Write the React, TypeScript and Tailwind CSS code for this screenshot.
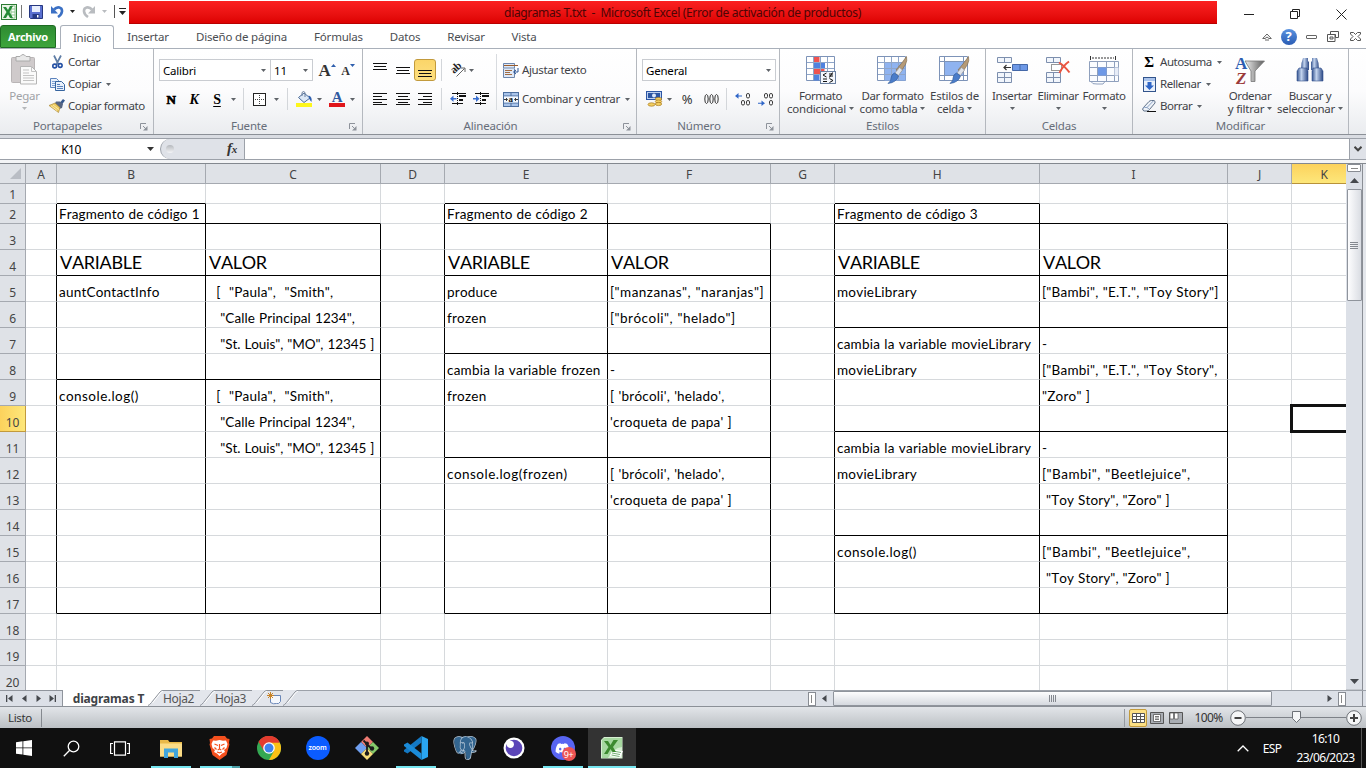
import React from "react";
import { SiPostgresql } from "react-icons/si";
import { FaDiscord } from "react-icons/fa";

/* ---------- small shared pieces ---------- */

function Arrow({ c = "#5f6368", big = false }: { c?: string; big?: boolean }) {
  return (
    <svg width={big ? 7 : 5} height={big ? 4 : 3} viewBox="0 0 6 3" className="shrink-0" preserveAspectRatio="none">
      <path d="M0 0h6L3 3z" fill={c} />
    </svg>
  );
}

function Slot({ w, className = "", children }: { w: string; className?: string; children?: React.ReactNode }) {
  return <div className={`flex shrink-0 items-center justify-center ${w} ${className}`}>{children}</div>;
}

function Sep() {
  return <div className="h-[22px] w-px shrink-0 bg-[#d3d6da]" />;
}

function Launcher() {
  return (
    <svg width="8" height="8" viewBox="0 0 8 8" className="shrink-0">
      <path d="M.5 6V.5H6M3 3l3 3" stroke="#8d929a" fill="none" />
      <path d="M7.500 3v4.500H3z" fill="#8d929a" />
    </svg>
  );
}

function Group({ w, label, launcher, children }: { w: string; label: string; launcher?: boolean; children: React.ReactNode }) {
  return (
    <section className={`flex h-full shrink-0 flex-col border-r border-[#b4b8be] ${w}`}>
      <div className="flex h-[69px] pt-[2px]">{children}</div>
      <div className="flex h-[17px] items-center text-[#666d79]">
        <div className={`flex-1 text-center ${launcher ? "-mr-px" : ""}`}>{label}</div>
        {launcher && (
          <div className="flex w-[19px] justify-center pt-[2px]">
            <Launcher />
          </div>
        )}
      </div>
    </section>
  );
}

function BigButton({ w, icon, a, b, below, tight = true }: { w: string; icon: React.ReactNode; a: string; b?: string; below?: boolean; tight?: boolean }) {
  return (
    <div className={`flex shrink-0 flex-col items-center pt-[3px] ${w}`}>
      <div className="flex h-[32px] items-center justify-center">{icon}</div>
      <div className={`mt-[3px] h-[13px] whitespace-nowrap leading-[13px] ${tight ? "tracking-[-0.4px]" : ""}`}>{a}</div>
      {b && (
        <div className="flex h-[13px] items-center gap-[3px] whitespace-nowrap leading-[13px] tracking-[-0.25px]">
          {b}
          <Arrow />
        </div>
      )}
      {below && (
        <div className="flex h-[12px] items-center">
          <Arrow />
        </div>
      )}
    </div>
  );
}

function SmallButton({ icon, text, arrow }: { icon: React.ReactNode; text: string; arrow?: boolean }) {
  return (
    <div className="flex h-[22px] items-center whitespace-nowrap">
      <div className="flex w-[18px] shrink-0 justify-center">{icon}</div>
      <span className="ml-[2px] pb-px">{text}</span>
      {arrow && (
        <span className="ml-[5px]">
          <Arrow />
        </span>
      )}
    </div>
  );
}

/* ---------- icons ---------- */

const ExcelMark = () => (
  <svg width="16" height="16" viewBox="0 0 16 16">
    <rect x=".5" y=".5" width="15" height="15" fill="#e9f4e6" stroke="#2b7a32" />
    <path d="M10 2h4v12h-4zM10 5h4M10 8h4M10 11h4" stroke="#8fc48d" fill="#fff" />
    <path d="M2 3h3l2 3 2-4h3L8.500 8l3.500 6H9L7 10.500 5 14H2l3.500-6z" fill="#258a36" />
  </svg>
);

const SaveIcon = () => (
  <svg width="14" height="14" viewBox="0 0 14 14">
    <path d="M.5.5h13v13h-12l-1-1z" fill="#5a70d0" stroke="#26377f" />
    <path d="M3 1h8v6H3z" fill="#e8eefc" />
    <path d="M3.500 9h7v4.500h-7z" fill="#263a86" />
    <path d="M8 10h1.500v2.500H8z" fill="#fff" />
  </svg>
);

const UndoIcon = ({ c = "#3b70c4", flip = false }: { c?: string; flip?: boolean }) => (
  <svg width="13" height="13" viewBox="0 0 13 13" className={flip ? "-scale-x-100" : ""}>
    <path d="M3 4.500C6.500.8 11.300 2.300 11 6.300c-.2 2.700-1.800 4.200-4 5.700" fill="none" stroke={c} strokeWidth="2.600" />
    <path d="M0 1v7.500h7z" fill={c} />
  </svg>
);

const PasteIcon = () => (
  <svg width="27" height="31" viewBox="0 0 27 31">
    <rect x=".5" y="3.500" width="23" height="25" rx="1" fill="#cfcacb" stroke="#b9b5b6" />
    <path d="M5 2.500h4q3-4 6 0h4V7H5z" fill="#e9e9e9" stroke="#aaa" />
    <path d="M9.500 12.500h11l5 5v12.500h-16z" fill="#fafafa" stroke="#b5b5b5" />
    <path d="M20.500 12.500v5h5M12 16h6M12 19h6M12 21.500h11M12 24h11M12 26.500h11" stroke="#c3c3c3" fill="none" />
  </svg>
);

const CutIcon = () => (
  <svg width="11" height="14" viewBox="0 0 11 14">
    <path d="M2 .5l4.500 9M9 .5L4.500 9" stroke="#5f7da5" strokeWidth="1.700" />
    <circle cx="2.700" cy="11" r="1.900" fill="none" stroke="#2450a4" strokeWidth="1.600" />
    <circle cx="8.200" cy="10.500" r="1.900" fill="none" stroke="#2450a4" strokeWidth="1.600" />
  </svg>
);

const CopyIcon = () => (
  <svg width="15" height="13" viewBox="0 0 15 13">
    <path d="M.5.5h6l2 2v7h-8z" fill="#eaf1fb" stroke="#5c83bd" />
    <path d="M2 3.500h4M2 5.500h5M2 7.500h4" stroke="#7fa1d2" />
    <path d="M5.500 3.500h6l3 3v6h-9z" fill="#eaf1fb" stroke="#37659f" />
    <path d="M7 6.500h3M7 8.500h6M7 10.500h6" stroke="#5c83bd" />
  </svg>
);

const BrushIcon = () => (
  <svg width="16" height="14" viewBox="0 0 16 14">
    <path d="M11 3.500L14 0l2 1.500-3 4z" fill="#35588e" />
    <path d="M7 2.500h4l3 2.500-1 4-3 1L5.500 5z" fill="#566583" />
    <path d="M0 6.500L6 4l5 4.500-1.500 5z" fill="#ecca62" stroke="#a5802d" strokeWidth=".6" />
    <path d="M2 6.800l6 4.700M4 6l6 4.500" stroke="#fff0b6" strokeWidth=".8" />
  </svg>
);

function Lines({ d, h = 12 }: { d: string; h?: number }) {
  return (
    <svg width="14" height={h} viewBox={`0 0 14 ${h}`} shapeRendering="crispEdges">
      <path d={d} stroke="#111" fill="none" />
    </svg>
  );
}

const IndentIcon = ({ right = false }: { right?: boolean }) => (
  <svg width="16" height="14" viewBox="0 0 16 14" className="shrink-0">
    <path d="M2 1.500h14M9 3.500h7M9 4.500h7M9 7.500h4M9 8.500h4M2 11.500h11" stroke="#111" shapeRendering="crispEdges" />
    <path d="M7.500 0v14" stroke="#111" strokeDasharray="1 1" />
    {right ? <path d="M0 6h3V3.500L6.500 6.700 3 10V7.500H0z" fill="#3a6fd0" /> : <path d="M6.500 6h-3V3.500L0 6.700 3.500 10V7.500h3z" fill="#3a6fd0" />}
  </svg>
);

const OrientIcon = () => (
  <svg width="16" height="15" viewBox="0 0 16 15" className="overflow-visible">
    <text x="4" y="12" transform="rotate(-42 4 12)" fontSize="11" letterSpacing="-0.3" fontWeight="bold" fontFamily="Liberation Serif" fill="#222">ab</text>
    <path d="M6.500 14.500L14.500 6.500M15 10V6H11" stroke="#666" fill="none" />
  </svg>
);

const WrapIcon = () => (
  <svg width="16" height="15" viewBox="0 0 16 15">
    <path d="M.5 5V.5h11V5zM.5 5.500v9h11v-9" fill="#dfe9f8" stroke="#6d86ac" />
    <path d="M1 2.500h14" stroke="#9b5d2c" />
    <path d="M2 7.500h7M2 9.500h5M2 11.500h7" stroke="#a06c43" />
    <path d="M15 5v4h-4m2-2l-2.500 2 2.500 2" stroke="#2b5598" fill="none" />
  </svg>
);

const MergeIcon = () => (
  <svg width="16" height="15" viewBox="0 0 16 15">
    <rect x=".5" y=".5" width="15" height="14" fill="#a9c4ea" stroke="#4d6f9f" />
    <path d="M1 4h14M1 11h14M8 1v3M8 11v3" stroke="#4d6f9f" />
    <path d="M1 4.500h14v6H1z" fill="#f4f8fe" />
    <path d="M1 7.500h3M12 7.500h3M3 6l1.500 1.500L3 9M13 6l-1.500 1.500L13 9" stroke="#222" fill="none" strokeWidth=".9" />
    <text x="5.600" y="10" fontSize="9" fontWeight="bold" fontFamily="Liberation Serif" fill="#111">a</text>
  </svg>
);

const BorderIcon = () => (
  <svg width="13" height="13" viewBox="0 0 13 13" shapeRendering="crispEdges">
    <rect x=".5" y=".5" width="12" height="12" fill="#fff" stroke="#222" />
    <path d="M6.500 2v10M2 6.500h10" stroke="#444" strokeDasharray="1 1" />
  </svg>
);

const FillIcon = () => (
  <svg width="17" height="16" viewBox="0 0 17 16">
    <path d="M2.500 6.500L8 2l6 5-6 4.500z" fill="#dce8f6" stroke="#4c6c98" />
    <path d="M6 5V1.500q1.500-2 3 0V6" stroke="#6a7f9d" fill="none" />
    <path d="M12.500 4.500q4 1 3 6.500-2-2-2.500-4z" fill="#2f5fae" />
    <path d="M0 12h16v4H0z" fill="#fdf61c" />
  </svg>
);

const CurrencyIcon = () => (
  <svg width="17" height="16" viewBox="0 0 17 16">
    <rect x="0" y="0" width="16" height="9" fill="#2c56a3" />
    <rect x="1.500" y="1.500" width="13" height="6" fill="none" stroke="#bcd0f0" />
    <circle cx="8" cy="4.500" r="2" fill="#dbe7fa" />
    <ellipse cx="12.500" cy="8" rx="3.200" ry="1.600" fill="#f3cf62" stroke="#a7791d" strokeWidth=".7" />
    <ellipse cx="12.500" cy="10.500" rx="3.200" ry="1.600" fill="#f3cf62" stroke="#a7791d" strokeWidth=".7" />
    <ellipse cx="12.500" cy="13" rx="3.200" ry="1.600" fill="#f3cf62" stroke="#a7791d" strokeWidth=".7" />
    <ellipse cx="5.500" cy="13.500" rx="3.500" ry="1.700" fill="#f3cf62" stroke="#a7791d" strokeWidth=".7" />
  </svg>
);

const DecimalIcon = ({ less = false }: { less?: boolean }) => (
  <svg width="16" height="13" viewBox="0 0 16 13" fill="none" stroke="#333" className="shrink-0">
    {less ? (
      <>
        <rect x="6.500" y=".5" width="3" height="4.500" rx="1.400" />
        <rect x="11.500" y=".5" width="3" height="4.500" rx="1.400" />
        <rect x="11.500" y="7.500" width="3" height="4.500" rx="1.400" />
        <path d="M0 9.800h3.500V7.500L7 10.300 3.500 13v-2.200H0z" fill="#2f66c8" stroke="none" />
      </>
    ) : (
      <>
        <rect x="11.500" y=".5" width="3" height="4.500" rx="1.400" />
        <rect x="6.500" y="7.500" width="3" height="4.500" rx="1.400" />
        <rect x="11.500" y="7.500" width="3" height="4.500" rx="1.400" />
        <path d="M7 2.500H3.500V0L0 3l3.500 2.800V3.500H7z" fill="#2f66c8" stroke="none" />
      </>
    )}
  </svg>
);

const GridBase = ({ fill }: { fill?: React.ReactNode }) => (
  <>
    <path d="M.5.5h28v24H.5z" fill="#fff" stroke="#7d93b8" />
    {fill}
    <path d="M7.500 1v23M14.500 1v23M21.500 1v23M1 6.500h27M1 12.500h27M1 18.500h27" stroke="#8fa5c8" fill="none" />
  </>
);

const Brush = () => (
  <>
    <path d="M29.500.5q1 4-1 8L23 17l-4-3 6.500-8z" fill="#b59a76" stroke="#7b6548" strokeWidth=".6" />
    <path d="M22.500 11.500l3 2.500-4 5.500-3.500-2.500z" fill="#dfe3ea" stroke="#8a8f99" strokeWidth=".6" />
    <path d="M17.500 17l4 3q-2 6.500-10.500 7.500 3.500-3 3-5.500.5-4 3.500-5z" fill="#4a7cc9" stroke="#2d5796" strokeWidth=".6" />
  </>
);

const CondIcon = () => (
  <svg width="30" height="28" viewBox="0 0 30 28">
    <GridBase fill={<><path d="M7.500 1h6v5.500h-6zM7.500 13h11v5.500h-11z" fill="#ef5350" /><path d="M7.500 7h11.500v5.500h-11.500zM7.500 19h6v5.500h-6z" fill="#4f82df" /></>} />
    <rect x="14.500" y="15.500" width="15" height="12" fill="#f4f7fc" stroke="#6a7f9f" />
    <path d="M20.500 17l-3.500 2 3.500 2M17 23h4M17 25.500h4M23 18h4M23 20h4M26.500 16.500l-3 5M23.500 22.500l3.500 2-3.500 2" stroke="#111" fill="none" />
  </svg>
);

const TableIcon = () => (
  <svg width="31" height="28" viewBox="0 0 31 28">
    <GridBase fill={<path d="M7.500 7h21v17.500h-21z" fill="#8fb3f0" />} />
    <Brush />
  </svg>
);

const CellStyleIcon = () => (
  <svg width="31" height="28" viewBox="0 0 31 28">
    <path d="M.5.5h28v24H.5z" fill="#fff" stroke="#7d93b8" />
    <path d="M5.500 5.500h19v14h-19z" fill="#8fb3f0" />
    <path d="M5.500 1v23M24.500 1v23M1 5.500h27M1 19.500h27" stroke="#7d93b8" />
    <Brush />
  </svg>
);

const InsertCells = () => (
  <svg width="31" height="27" viewBox="0 0 31 27">
    <path d="M.5.500h14v5H.5zM7.500.5v5M.5 15.500h14v10H.5zM7.500 15.500v10M.5 20.500h14" fill="#f2f6fc" stroke="#7d8fae" />
    <path d="M15.500 7.500h15v6h-15z" fill="#6d98e6" stroke="#4468a8" />
    <path d="M23 7.500v6" stroke="#4468a8" />
    <path d="M14 10.500H7M9.500 8L7 10.500 9.500 13" stroke="#333" fill="none" strokeWidth="1.200" />
  </svg>
);

const DeleteCells = () => (
  <svg width="25" height="27" viewBox="0 0 25 27">
    <path d="M.5.500h14v5H.5zM7.500.5v5M.5 15.500h14v10H.5zM7.500 15.500v10M.5 20.500h14" fill="#f2f6fc" stroke="#7d8fae" />
    <path d="M5.500 7.500h10v6h-10z" fill="#fff" stroke="#333" strokeDasharray="1 1" />
    <path d="M13 5.500q5 3 10.500 10M23 4.500q-6 4-9.500 11.500" stroke="#ea5440" strokeWidth="2" fill="none" />
  </svg>
);

const FormatCells = () => (
  <svg width="31" height="29" viewBox="0 0 31 29">
    <path d="M1.500 0v4M26.500 0v4" stroke="#333" />
    <path d="M3 2h22" stroke="#333" strokeDasharray="2 1" />
    <path d="M.5 5.500h29v20H.5zM.5 11.500h29M.5 19.500h29M8.500 5.500v20M17.500 5.500v20M25.500 5.500v20M2 25.500q1 3 6 2.500h6l2-2.500" fill="#fafcff" stroke="#8fa0bd" />
    <path d="M9 11.500h8.500v8H9z" fill="#6d98e6" />
    <path d="M25.500 11.500h4v8h-4z" fill="#e7edf8" />
  </svg>
);

const RellenarIcon = () => (
  <svg width="13" height="15" viewBox="0 0 13 15">
    <rect x=".5" y=".5" width="12" height="14" fill="#eaf1fb" stroke="#32548c" />
    <path d="M1 1h11v3H1z" fill="#a9c3ec" />
    <path d="M4.500 5h4v3.500H11L6.500 13 2 8.500h2.500z" fill="#2f66c8" />
  </svg>
);

const EraserIcon = () => (
  <svg width="14" height="12" viewBox="0 0 14 12">
    <path d="M1 8L7 1.500Q8 .5 9.500.5h2.500Q13.500 1 13 3L7.500 9.500Q6.500 11 5 11H2Q0 10.500 1 8z" fill="#eef2f8" stroke="#5f7088" />
    <path d="M1 8q1-1 4-.5l2 1.500M5 7.500L11.500.800" stroke="#8ba2c4" fill="none" />
    <path d="M5 11.500h9" stroke="#111" />
  </svg>
);

const SortIcon = () => (
  <svg width="30" height="30" viewBox="0 0 30 30" className="overflow-visible">
    <defs>
      <linearGradient id="fun" x1="0" x2="1">
        <stop offset="0" stopColor="#ededed" />
        <stop offset="1" stopColor="#5c5c5c" />
      </linearGradient>
    </defs>
    <path d="M10 6h19.500L20 16v10.500h-4V16z" fill="url(#fun)" stroke="#777" strokeWidth=".8" />
    <text x="0" y="13.500" fontSize="17" fontWeight="bold" fontFamily="Liberation Serif" fill="#2c5cb0" stroke="#fff" strokeWidth=".5" paintOrder="stroke">A</text>
    <text x="1" y="28.500" fontSize="17" fontWeight="bold" fontStyle="italic" fontFamily="Liberation Serif" fill="#9b3b3b" stroke="#fff" strokeWidth=".5" paintOrder="stroke">Z</text>
  </svg>
);

const Binoculars = () => (
  <svg width="28" height="26" viewBox="0 0 28 26">
    <defs>
      <linearGradient id="bino" x1="0" x2="1">
        <stop offset="0" stopColor="#34538f" />
        <stop offset=".4" stopColor="#c3d4ee" />
        <stop offset="1" stopColor="#2b4885" />
      </linearGradient>
    </defs>
    <path d="M7 1h5v3l1 1v8H5l.5-7z" fill="url(#bino)" />
    <path d="M16 1h5l1.500 5 .5 7h-8V5l1-1z" fill="url(#bino)" />
    <path d="M1 14l2-3h8l1 3v10H1z" fill="url(#bino)" stroke="#34538f" strokeWidth=".6" />
    <path d="M16 14l1-3h8l2 3v10H16z" fill="url(#bino)" stroke="#34538f" strokeWidth=".6" />
  </svg>
);

/* ---------- title bar and tabs ---------- */

function TitleBar() {
  return (
    <header className="flex h-[25px] bg-white">
      <div className="flex w-[129px] items-center pb-[2px]">
        <Slot w="w-[18px]"><ExcelMark /></Slot>
        <Slot w="w-[6px]"><div className="h-[13px] w-px bg-[#777]" /></Slot>
        <Slot w="w-[24px]"><SaveIcon /></Slot>
        <Slot w="w-[18px]"><UndoIcon /></Slot>
        <Slot w="w-[13px]"><Arrow c="#222" /></Slot>
        <Slot w="w-[19px]"><UndoIcon c="#b9bcc0" flip /></Slot>
        <Slot w="w-[12px]"><Arrow c="#b9bcc0" /></Slot>
        <Slot w="w-[9px]"><div className="h-[13px] w-px bg-[#555]" /></Slot>
        <Slot w="w-[7px]">
          <svg width="7" height="7" viewBox="0 0 7 7"><path d="M0 .5h7" stroke="#222" /><path d="M0 3h7L3.500 7z" fill="#222" /></svg>
        </Slot>
      </div>
      <div className="mt-px flex h-[23px] w-[1088px] items-center justify-center whitespace-pre bg-gradient-to-b from-[#fb2020] to-[#dc0000] text-[12px] tracking-[-0.35px] text-[#4d0505] shadow-[inset_0_-1px_0_#b80000]">
        <span className="pl-[19px]">{"diagramas T.txt  -  Microsoft Excel (Error de activación de productos)"}</span>
      </div>
      <div className="flex flex-1 pl-[9px] pt-[4px] text-[#222]">
        <Slot w="w-[46px]" className="h-[20px]"><div className="h-px w-[10px] bg-[#222]" /></Slot>
        <Slot w="w-[46px]" className="h-[20px]">
          <svg width="10" height="10" viewBox="0 0 10 10" fill="none" stroke="#222"><path d="M.5 2.500h7v7h-7zM2.500 2.500v-2h7v7h-2" /></svg>
        </Slot>
        <Slot w="w-[46px]" className="h-[20px]">
          <svg width="11" height="11" viewBox="0 0 11 11" stroke="#222"><path d="M.5.5l10 10M10.500.5l-10 10" /></svg>
        </Slot>
      </div>
    </header>
  );
}

function TabRow() {
  return (
    <nav className="flex h-[24px] border-b border-[#a9b0ba] bg-white text-[#4a4d52]">
      <div className="flex w-[56px] items-center justify-center rounded-t-[3px] border border-[#1e6b22] bg-gradient-to-b from-[#2e8b32] to-[#3da53c] text-[11px] font-bold tracking-[-0.25px] text-white">
        Archivo
      </div>
      <div className="ml-[4px] flex h-[24px] w-[54px] items-center justify-center rounded-t-[3px] border border-b-0 border-[#a9b0ba] bg-white pb-px">
        Inicio
      </div>
      <Slot w="w-[68px]">Insertar</Slot>
      <Slot w="w-[119px]">Diseño de página</Slot>
      <Slot w="w-[75px]">Fórmulas</Slot>
      <Slot w="w-[58px]">Datos</Slot>
      <Slot w="w-[64px]">Revisar</Slot>
      <Slot w="w-[52px]">Vista</Slot>
      <div className="ml-auto flex">
        <Slot w="w-[20px]">
          <svg width="10" height="8" viewBox="0 0 10 8" fill="none" stroke="#666"><path d="M.7 5.500L5 1l4.300 4.500H7L5 4 3 5.500zM3 7h4" /></svg>
        </Slot>
        <Slot w="w-[23px]">
          <div className="flex size-[16px] items-center justify-center rounded-full bg-gradient-to-b from-[#5a92e0] to-[#2a5cb4] text-[13px] font-bold leading-none text-white">?</div>
        </Slot>
        <Slot w="w-[22px]"><div className="h-[4px] w-[11px] rounded-[1px] border border-[#666]" /></Slot>
        <Slot w="w-[22px]">
          <svg width="12" height="11" viewBox="0 0 12 11" fill="#fff" stroke="#555"><path d="M3.500.5h8v6h-3v-3h-5zM.5 3.500h7.500v7H.5zM3 6h3v2H3z" /></svg>
        </Slot>
        <Slot w="w-[22px]">
          <svg width="11" height="9" viewBox="0 0 11 9" fill="#fff" stroke="#555"><path d="M.5.5h3l2 2 2-2h3v1.500L8 4.500 10.500 7v1.500h-3l-2-2-2 2h-3V7L3 4.500.5 2z" /></svg>
        </Slot>
      </div>
    </nav>
  );
}

/* ---------- ribbon ---------- */

function Ribbon() {
  return (
    <div className="flex h-[86px] border-b border-[#8b9097] bg-gradient-to-b from-white via-[#fcfcfd] to-[#eaecef]">
      <Group w="w-[154px]" label="Portapapeles" launcher>
        <div className="flex w-[49px] shrink-0 flex-col items-center pt-[3px] text-[#a0a2a6]">
          <PasteIcon />
          <div className="mt-[4px] h-[13px] leading-[13px]">Pegar</div>
          <div className="flex h-[12px] items-center"><Arrow c="#b5b7ba" /></div>
        </div>
        <div className="-ml-px flex flex-col tracking-[-0.4px]">
          <SmallButton icon={<CutIcon />} text="Cortar" />
          <SmallButton icon={<CopyIcon />} text="Copiar" arrow />
          <SmallButton icon={<BrushIcon />} text="Copiar formato" />
        </div>
      </Group>

      <Group w="w-[209px]" label="Fuente" launcher>
        <div className="flex flex-col pl-[5px] pt-[8px]">
          <div className="flex h-[22px] items-center">
            <div className="flex h-[22px] w-[112px] items-center justify-between border border-[#c9ccd1] bg-white pl-[3px] pr-[4px] text-black">Calibri<Arrow /></div>
            <div className="-ml-px flex h-[22px] w-[43px] items-center justify-between border border-[#c9ccd1] bg-white pl-[3px] pr-[4px] text-black">11<Arrow /></div>
            <Slot w="w-[26px]" className="pl-[2px] font-[Liberation_Serif] text-[17px] font-bold text-[#333]">
              A<svg width="5" height="3" viewBox="0 0 5 3" className="mb-[10px] shrink-0"><path d="M0 3h5L2.500 0z" fill="#2f5fae" /></svg>
            </Slot>
            <Slot w="w-[18px]" className="pt-[3px] font-[Liberation_Serif] text-[12px] font-bold text-[#333]">
              A<svg width="5" height="3" viewBox="0 0 5 3" className="mb-[13px] shrink-0"><path d="M0 0h5L2.500 3z" fill="#2f5fae" /></svg>
            </Slot>
          </div>
          <div className="mt-[7px] flex h-[22px] items-center text-black">
            <Slot w="w-[24px]" className="font-[Liberation_Serif] text-[13px] font-black [-webkit-text-stroke:0.7px_#000]">N</Slot>
            <Slot w="w-[22px]" className="font-[Liberation_Serif] text-[14px] font-black italic">K</Slot>
            <Slot w="w-[24px]" className="font-[Liberation_Serif] text-[14px] font-bold underline underline-offset-2">S</Slot>
            <Slot w="w-[9px]"><Arrow /></Slot>
            <div className="w-[5px]" />
            <Sep />
            <Slot w="w-[30px]"><BorderIcon /></Slot>
            <Slot w="w-[5px]"><Arrow /></Slot>
            <div className="w-[8px]" />
            <Sep />
            <Slot w="w-[33px]"><FillIcon /></Slot>
            <Slot w="w-0" className="-ml-[2px] mr-[2px]"><Arrow /></Slot>
            <Slot w="w-[32px]">
              <div className="flex flex-col items-center">
                <span className="h-[12px] font-[Liberation_Serif] text-[15px] font-bold leading-[12px] text-[#3059a0]">A</span>
                <span className="h-[4px] w-[16px] bg-[#e0161b]" />
              </div>
            </Slot>
            <Slot w="w-0" className="-ml-px"><Arrow /></Slot>
          </div>
        </div>
      </Group>

      <Group w="w-[274px]" label="Alineación" launcher>
        <div className="flex pt-[8px]">
          <div className="flex w-[78px] flex-col pl-[5px]">
            <div className="flex h-[22px] items-center">
              <Slot w="w-[23px]"><Lines d="M0 1.500h14M1 4.500h12M0 7.500h14" h={16} /></Slot>
              <Slot w="w-[23px]"><Lines d="M0 5.500h14M1 8.500h12M0 11.500h14" h={16} /></Slot>
              <Slot w="w-[22px]" className="h-[22px] rounded-[3px] border border-[#c29a3c] bg-gradient-to-b from-[#fbd569] to-[#fddf80]">
                <Lines d="M0 10.500h14M1 13.500h12M0 16.500h14" h={20} />
              </Slot>
            </div>
            <div className="mt-[7px] flex h-[22px] items-center">
              <Slot w="w-[23px]"><Lines d="M0 .5h14M0 3.500h9M0 6.500h14M0 9.500h9M0 11.500h14" h={12} /></Slot>
              <Slot w="w-[23px]"><Lines d="M0 .5h14M2 3.500h10M0 6.500h14M2 9.500h10M0 11.500h14" h={12} /></Slot>
              <Slot w="w-[22px]"><Lines d="M0 .5h14M5 3.500h9M0 6.500h14M5 9.500h9M0 11.500h14" h={12} /></Slot>
            </div>
          </div>
          <div className="flex w-[55px] flex-col">
            <div className="flex h-[22px] items-center"><Sep /><Slot w="w-[27px]" className="pl-[5px] pb-px"><OrientIcon /></Slot><Arrow /></div>
            <div className="mt-[7px] flex h-[22px] items-center"><Sep /><Slot w="w-[32px]"><IndentIcon /></Slot><Slot w="w-[14px]"><IndentIcon right /></Slot></div>
          </div>
          <div className="-mt-[5px] h-[56px] w-px bg-[#d8dbdf]" />
          <div className="flex flex-col pl-[5px] tracking-[-0.35px]">
            <SmallButton icon={<WrapIcon />} text="Ajustar texto" />
            <div className="mt-[7px]"><SmallButton icon={<MergeIcon />} text="Combinar y centrar" arrow /></div>
          </div>
        </div>
      </Group>

      <Group w="w-[143px]" label="Número" launcher>
        <div className="flex flex-col pl-[5px] pt-[8px]">
          <div className="flex h-[22px] w-[134px] items-center justify-between border border-[#c9ccd1] bg-white pl-[3px] pr-[4px] text-black">General<Arrow /></div>
          <div className="mt-[7px] flex h-[22px] items-center text-[#333]">
            <Slot w="w-[24px]"><CurrencyIcon /></Slot>
            <Slot w="w-[7px]"><Arrow /></Slot>
            <Slot w="w-[28px]" className="text-[13px]">%</Slot>
            <Slot w="w-[20px]">
              <svg width="15" height="10" viewBox="0 0 15 10" fill="none" stroke="#333"><path d="M2.500.5q1.700 0 1.700 4.500t-1.700 4.500T.8 5 2.500.5zM7.500.5q1.700 0 1.700 4.500t-1.700 4.500T5.800 5 7.500.5zM12.500.5q1.700 0 1.700 4.500t-1.700 4.500T10.800 5 12.500.5z" /></svg>
            </Slot>
            <div className="w-[5px]" />
            <Sep />
            <Slot w="w-[32px]"><DecimalIcon /></Slot>
            <Slot w="w-[13px]"><DecimalIcon less /></Slot>
          </div>
        </div>
      </Group>

      <Group w="w-[206px]" label="Estilos">
        <BigButton w="w-[81px]" icon={<CondIcon />} a="Formato" b="condicional" />
        <BigButton w="w-[63px]" icon={<TableIcon />} a="Dar formato" b="como tabla" />
        <BigButton w="w-[61px]" icon={<CellStyleIcon />} a="Estilos de" b="celda" tight={false} />
      </Group>

      <Group w="w-[147px]" label="Celdas">
        <BigButton w="w-[52px]" icon={<InsertCells />} a="Insertar" below />
        <BigButton w="w-[40px]" icon={<DeleteCells />} a="Eliminar" below />
        <BigButton w="w-[52px]" icon={<FormatCells />} a="Formato" below />
      </Group>

      <Group w="w-[216px]" label="Modificar">
        <div className="flex w-[88px] shrink-0 flex-col pl-[7px] tracking-[-0.45px]">
          <SmallButton icon={<span className="font-[Liberation_Serif] text-[15px] font-bold leading-none text-black">Σ</span>} text="Autosuma" arrow />
          <SmallButton icon={<RellenarIcon />} text="Rellenar" arrow />
          <SmallButton icon={<EraserIcon />} text="Borrar" arrow />
        </div>
        <BigButton w="w-[58px]" icon={<SortIcon />} a="Ordenar" b="y filtrar" />
        <BigButton w="w-[62px]" icon={<Binoculars />} a="Buscar y" b="seleccionar" />
      </Group>
    </div>
  );
}

/* ---------- formula bar ---------- */

function FormulaBar() {
  return (
    <div className="flex h-[29px] flex-col bg-[#d9dce2] pt-[3px]">
      <div className="flex h-[22px] border-y border-[#9ca1a9] bg-white">
        <div className="flex w-[160px] items-center text-[12px] text-black">
          <span className="w-[147px] pr-[5px] text-center tracking-[-0.5px]">K10</span>
          <Arrow c="#333" big />
        </div>
        <div className="flex w-[85px] items-center justify-between rounded-l-full border-l border-r border-[#9ca1a9] bg-[#dfe2e8] pl-[5px] pr-[7px]">
          <div className="size-[8px] rounded-full bg-gradient-to-b from-[#b5b8bd] to-[#f4f5f7]" />
          <span className="font-[Liberation_Serif] text-[15px] font-bold italic text-[#333]">f<span className="text-[11px]">x</span></span>
        </div>
        <div className="flex-1" />
        <div className="flex w-[17px] items-center justify-center border-l border-[#9ca1a9] bg-[#dfe2e8]">
          <svg width="8" height="6" viewBox="0 0 8 6" fill="none" stroke="#444" strokeWidth="2"><path d="M.5.8L4 4.300 7.500.8" /></svg>
        </div>
      </div>
      <div className="h-[3px] bg-[#f3f4f6]" />
      <div className="h-px bg-[#83888f]" />
    </div>
  );
}

/* ---------- sheet ---------- */

const cols = [
  ["A", "w-[31px]"], ["B", "w-[149px]"], ["C", "w-[175px]"], ["D", "w-[64px]"], ["E", "w-[163px]"], ["F", "w-[163px]"],
  ["G", "w-[64px]"], ["H", "w-[205px]"], ["I", "w-[188px]"], ["J", "w-[64px]"], ["K", "w-[54px]"],
];

const values: Record<string, string> = {
  B2: "Fragmento de código 1", E2: "Fragmento de código 2", H2: "Fragmento de código 3",
  B4: "VARIABLE", C4: "VALOR", E4: "VARIABLE", F4: "VALOR", H4: "VARIABLE", I4: "VALOR",
  B5: "auntContactInfo", B9: "console.log()",
  C5: '  [  "Paula",  "Smith",', C6: '   "Calle Principal 1234",', C7: '   "St. Louis", "MO", 12345 ]',
  C9: '  [  "Paula",  "Smith",', C10: '   "Calle Principal 1234",', C11: '   "St. Louis", "MO", 12345 ]',
  E5: "produce", E6: "frozen", E8: "cambia la variable frozen", E9: "frozen", E12: "console.log(frozen)",
  F5: '["manzanas", "naranjas"]', F6: '["brócoli", "helado"]', F8: "-",
  F9: "[ 'brócoli', 'helado',", F10: "'croqueta de papa' ]", F12: "[ 'brócoli', 'helado',", F13: "'croqueta de papa' ]",
  H5: "movieLibrary", H7: "cambia la variable movieLibrary", H8: "movieLibrary",
  H11: "cambia la variable movieLibrary", H12: "movieLibrary", H15: "console.log()",
  I5: '["Bambi", "E.T.", "Toy Story"]', I7: "-", I8: '["Bambi", "E.T.", "Toy Story",', I9: '"Zoro" ]',
  I11: "-", I12: '["Bambi", "Beetlejuice",', I13: ' "Toy Story", "Zoro" ]', I15: '["Bambi", "Beetlejuice",', I16: ' "Toy Story", "Zoro" ]',
};

const tight = "tracking-[0.1px] [word-spacing:0.5px]";
const tighter = "tracking-[-0.07px] [word-spacing:0.7px]";
const wide = "tracking-[0.47px] [word-spacing:0.5px]";

const spacing: Record<string, string> = {
  B2: tight, E2: tight, H2: tight, C6: tight, C10: tight, I13: tight, I16: tight,
  C7: tighter, C11: tighter,
  F5: wide, F6: wide, E12: wide, B9: wide, H15: wide, I12: wide, I15: wide,
};

const blocks = [
  { before: "A", left: "B", right: "C", rules: [2, 4, 8, 17] },
  { before: "D", left: "E", right: "F", rules: [2, 4, 7, 11, 17] },
  { before: "G", left: "H", right: "I", rules: [2, 4, 6, 10, 14, 17] },
];

function ruleRight(col: string, row: number) {
  return blocks.some((b) =>
    ((col === b.before || col === b.left) && row >= 2 && row <= 17) || (col === b.right && row >= 3 && row <= 17));
}

function ruleBottom(col: string, row: number) {
  return blocks.some((b) => (col === b.left && row === 1) || ((col === b.left || col === b.right) && b.rules.includes(row)));
}

function Sheet() {
  const rows = Array.from({ length: 20 }, (_, i) => i + 1);
  return (
    <div className="relative flex h-[526px] w-[1346px] shrink-0 flex-col overflow-hidden bg-white">
      <div className="flex h-[20px] shrink-0 bg-[#dfe2e7] text-[12px] text-[#444]">
        <div className="flex w-[26px] items-end justify-end border-b border-r border-[#a5a9b0] p-[4px]">
          <svg width="11" height="11" viewBox="0 0 11 11"><path d="M11 0v11H0z" fill="#b9bdc4" /></svg>
        </div>
        {cols.map(([name, w]) => (
          <div key={name} className={`flex items-center justify-center border-b pt-[2px] ${w} ${name === "K" ? "border-[#b8923a] bg-gradient-to-b from-[#fcd25c] to-[#fde77a] pl-[10px]" : "border-r border-[#a5a9b0]"}`}>
            {name}
          </div>
        ))}
      </div>
      {rows.map((r) => (
        <div key={r} className={`flex shrink-0 ${r <= 2 ? "h-[20px]" : "h-[26px]"}`}>
          <div className={`flex w-[26px] items-end justify-center border-b border-r text-[12px] leading-[17px] text-[#444] ${r === 10 ? "border-[#c29a3c] bg-gradient-to-r from-[#fcd25c] to-[#fde77a]" : "border-[#a5a9b0] bg-[#dfe2e7]"}`}>
            {r}
          </div>
          {cols.map(([name, w]) => {
            const big = r === 4;
            const gap = spacing[name + r] ?? "tracking-[0.22px] [word-spacing:0.5px]";
            return (
              <div
                key={name}
                className={`flex items-end overflow-hidden whitespace-pre border-b font-[Lato] text-black [font-kerning:none] [font-variant-ligatures:none] ${w} ${name === "K" ? "" : "border-r"} ${ruleRight(name, r) ? "border-r-black" : "border-r-[#d6d9dc]"} ${ruleBottom(name, r) ? "border-b-black" : "border-b-[#d6d9dc]"} ${big ? "pb-px pl-[3px] text-[18px] leading-[24px] tracking-[-0.3px]" : `pl-[2px] text-[13.500px] leading-[18px] ${gap}`}`}
              >
                {values[name + r] ?? ""}
              </div>
            );
          })}
        </div>
      ))}
      <div className="absolute left-[1290px] top-[240px] h-[29px] w-[70px] border-[3px] border-[#111]" />
    </div>
  );
}

function VerticalScroll() {
  return (
    <div className="flex h-[526px] w-[20px] bg-[#e4e7ec]">
      <div className="flex w-[17px] flex-col items-center border-r border-[#8a8e95] bg-[#dce0e7]">
        <div className="flex h-[8px] w-[14px] items-center justify-center rounded-[1px] border border-[#888c93] bg-white"><div className="h-px w-[7px] bg-[#888]" /></div>
        <div className="flex h-[17px] items-center"><svg width="9" height="5" viewBox="0 0 9 5"><path d="M0 5h9L4.500 0z" fill="#45484d" /></svg></div>
        <div className="flex h-[112px] w-[15px] flex-col items-center justify-center gap-px rounded-[1px] border border-[#8f949c] bg-gradient-to-r from-[#fdfdfe] to-[#dadde3]">
          <div className="h-px w-[8px] bg-[#84888f]" />
          <div className="h-px w-[8px] bg-[#84888f]" />
          <div className="h-px w-[8px] bg-[#84888f]" />
          <div className="h-px w-[8px] bg-[#84888f]" />
        </div>
        <div className="mt-auto flex h-[17px] w-full items-center justify-center border-b border-[#c3c7cd]"><svg width="9" height="5" viewBox="0 0 9 5"><path d="M0 0h9L4.500 5z" fill="#45484d" /></svg></div>
      </div>
    </div>
  );
}

/* ---------- sheet tabs ---------- */

function Slant({ left, right = "#e3e6ec" }: { left: string; right?: string }) {
  return (
    <svg width="15" height="16" viewBox="0 0 15 16" className="shrink-0">
      <path d="M0 0h15v16H0z" fill={right} />
      <path d="M0 0h14L2 14q-1 1.500-2 1.500z" fill={left} />
      <path d="M15 .5Q13 .5 12 2L3.500 12.500Q1.500 15 0 15.500" fill="none" stroke="#8f949c" />
      <path d="M15 1.500Q13.500 1.500 12.500 3L4.500 13" fill="none" stroke="#fff" />
    </svg>
  );
}

function NavGlyph({ d }: { d: string }) {
  return <svg width="7" height="7" viewBox="0 0 7 7"><path d={d} fill="#45484d" /></svg>;
}

function SheetTabs() {
  return (
    <div className="flex h-[16px] bg-[#dce0e7] text-[12px] leading-[14px] text-[#555]">
      <div className="flex w-[63px] items-center border-r border-t border-[#8f949c] pl-[4px]">
        <Slot w="w-[10px]"><NavGlyph d="M0 0h1.300v7H0zM6.500 0v7L2 3.500z" /></Slot>
        <Slot w="w-[20px]"><NavGlyph d="M5.500 0v7L1 3.500z" /></Slot>
        <Slot w="w-[8px]"><NavGlyph d="M1.500 0v7L6 3.500z" /></Slot>
        <Slot w="w-[21px]"><NavGlyph d="M.5 0v7L5 3.500zM5.700 0H7v7H5.700z" /></Slot>
      </div>
      <Slot w="w-[85px]" className="bg-white pl-[6px] pt-px font-bold tracking-[-0.15px] text-[#404347]">diagramas T</Slot>
      <Slant left="#fff" />
      <Slot w="w-[37px]" className="border-t border-[#8f949c] bg-[#e3e6ec] pr-[6px] tracking-[-0.35px]">Hoja2</Slot>
      <Slant left="#e3e6ec" />
      <Slot w="w-[37px]" className="border-t border-[#8f949c] bg-[#e3e6ec] pr-[6px] tracking-[-0.35px]">Hoja3</Slot>
      <Slant left="#e3e6ec" />
      <Slot w="w-[16px]" className="border-t border-[#8f949c] bg-[#e3e6ec]">
        <svg width="15" height="13" viewBox="0 0 15 13" className="-ml-px shrink-0">
          <path d="M3.500 3.500h10v6q-2 3-4 2-3 1-6-1z" fill="#f4f7fc" stroke="#6a87b8" />
          <path d="M3.500 0v7M0 3.500h7M1 1l5 5M6 1L1 6" stroke="#c88327" />
        </svg>
      </Slot>
      <Slant left="#e3e6ec" right="#dce0e7" />
      <div className="flex flex-1 items-center border-t border-[#9ca1a9]">
        <div className="ml-auto h-[14px] w-[8px] border border-[#888c93] bg-white px-[2px] py-[2px]"><div className="h-full w-px bg-[#888]" /></div>
        <Slot w="w-[17px]"><NavGlyph d="M5.500 0v7L1 3.500z" /></Slot>
        <div className="flex h-[15px] w-[439px] items-center justify-center gap-px rounded-[1px] border border-[#8f949c] bg-gradient-to-b from-[#fdfdfe] to-[#d5d9df]">
          <div className="h-[7px] w-px bg-[#84888f]" />
          <div className="h-[7px] w-px bg-[#84888f]" />
          <div className="h-[7px] w-px bg-[#84888f]" />
          <div className="h-[7px] w-px bg-[#84888f]" />
        </div>
        <div className="w-[52px]" />
        <Slot w="w-[10px]"><NavGlyph d="M1.500 0v7L6 3.500z" /></Slot>
        <div className="w-[4px]" />
        <div className="h-[14px] w-[8px] border border-[#888c93] bg-white px-[2px] py-[2px]"><div className="h-full w-px bg-[#888]" /></div>
        <div className="h-[15px] w-[17px] border-r border-[#8a8e95]" />
        <div className="w-[3px]" />
      </div>
    </div>
  );
}

/* ---------- status bar ---------- */

function StatusBar() {
  return (
    <div className="flex h-[22px] items-center border-t border-[#8b9097] bg-gradient-to-b from-[#e2e5e9] to-[#bcc0c4] text-[#333]">
      <span className="w-[41px] pb-px pl-[8px] tracking-[-0.35px]">Listo</span>
      <div className="h-[18px] w-px bg-[#85898f]" />
      <div className="ml-auto h-[18px] w-px bg-[#95999f]" />
      <div className="flex items-center pl-[4px]">
        <div className="flex h-[18px] w-[18px] items-center justify-center rounded-[2px] border border-[#c29a3c] bg-[#fde083]">
          <svg width="13" height="10" viewBox="0 0 13 10"><path d="M.5.5h12v9H.5zM.5 3.500h12M.5 6.500h12M4.500.5v9M8.500.5v9" fill="#fff" stroke="#555" /></svg>
        </div>
        <Slot w="w-[20px]"><svg width="14" height="12" viewBox="0 0 14 12"><path d="M.5.5h13v11H.5z" fill="#a9adb3" stroke="#555" /><path d="M3.500 2.500h7v7h-7zM5 4.500h4M5 6h4M5 7.500h4" fill="#fff" stroke="#555" strokeWidth=".8" /></svg></Slot>
        <Slot w="w-[18px]"><svg width="14" height="12" viewBox="0 0 14 12"><path d="M.5.5h13v11H.5z" fill="#a9adb3" stroke="#555" /><path d="M1 1h3.500v6H1zM5.500 1H9v6H5.500z" fill="#fff" stroke="#555" strokeWidth=".7" /></svg></Slot>
      </div>
      <span className="w-[45px] pl-[2px] text-center text-[12px] tracking-[-0.6px]">100%</span>
      <Zoomer />
    </div>
  );
}

function Zoomer() {
  return (
    <svg width="136" height="18" viewBox="0 0 136 18">
      <path d="M16 8.500h100" stroke="#7d8187" />
      <circle cx="8" cy="9" r="7.300" fill="#f5f6f7" stroke="#6d7177" />
      <path d="M4.500 9h7" stroke="#444" strokeWidth="2" />
      <circle cx="124" cy="9" r="7.300" fill="#f5f6f7" stroke="#6d7177" />
      <path d="M120 9h8M124 5v8" stroke="#444" strokeWidth="2" />
      <path d="M62.500 2.500h8v7l-4 4-4-4z" fill="#f5f6f7" stroke="#6d7177" />
    </svg>
  );
}

/* ---------- taskbar ---------- */

function TaskItem({ children, open, dimEnd, active }: { children: React.ReactNode; open?: boolean; dimEnd?: boolean; active?: boolean }) {
  return (
    <div className={`flex h-[40px] shrink-0 flex-col items-center ${active ? "ml-px w-[48px] bg-[#333]" : "w-[49px]"}`}>
      <div className="flex h-[38px] items-center justify-center pt-[2px]">{children}</div>
      {open && (
        <div className={`flex h-[2px] bg-[#76e6f0] ${active ? "w-[48px]" : "w-[40px]"}`}>
          {dimEnd && <div className="ml-auto w-[8px] bg-[#4a9ea5]" />}
        </div>
      )}
    </div>
  );
}

function Taskbar() {
  return (
    <footer className="flex h-[40px] bg-[#101010] text-white">
      <Slot w="w-[48px]"><svg width="16" height="16" viewBox="0 0 16 16" fill="#fff"><path d="M0 2.200L6.500 1.300v6.200H0zM7.300 1.200L16 0v7.500H7.300zM0 8.300h6.500v6.300L0 13.700zM7.300 8.300H16V16l-8.700-1.200z" /></svg></Slot>
      <Slot w="w-[47px]"><svg width="17" height="17" viewBox="0 0 17 17" fill="none" stroke="#fff" strokeWidth="1.300"><circle cx="10.500" cy="6.500" r="5.300" /><path d="M6.700 10.300L.8 16.200" /></svg></Slot>
      <Slot w="w-[51px]" className="pr-px"><svg width="20" height="15" viewBox="0 0 20 15" fill="none" stroke="#fff" strokeWidth="1.200"><path d="M4.500.8h11v13.400h-11zM3 2.500H.6v10H3M17 2.500h2.400v10H17" /></svg></Slot>
      <TaskItem open>
        <svg width="22" height="19" viewBox="0 0 22 19">
          <path d="M0 1h8l1.500 2H22v14.500H0z" fill="#e9b949" />
          <path d="M0 4.500h22v13H0z" fill="#fbdc86" />
          <path d="M4 9.500h14V19h-4v-5.500H8V19H4z" fill="#41a5dc" />
        </svg>
      </TaskItem>
      <TaskItem open dimEnd>
        <svg width="21" height="24" viewBox="0 0 21 24">
          <path d="M5 0h11l2 2.500 2.500.5-.5 4 .5 1.500-3 10.500L10.500 24l-7-5L.5 8.500 1 7 .5 3 3 2.500z" fill="#f4501e" />
          <path d="M4 4.500l3 .3 3.500-.8 3.500.8 3-.3 1.500 3.500-1 4-2.500 2 1 2-3 1.500-2.500 2.500-2.500-2.500-3-1.500 1-2-2.500-2-1-4z" fill="#fff" />
          <path d="M5.500 8l3.500 1.500M15.500 8L12 9.500M10.500 8v5l-1.800 1M10.500 13l1.800 1M8 16l2.500.8L13 16M5.500 11.500l2 2M15.500 11.500l-2 2" stroke="#f4501e" strokeWidth="1.200" fill="none" />
        </svg>
      </TaskItem>
      <TaskItem>
        <svg width="24" height="24" viewBox="0 0 24 24">
          <circle cx="12" cy="12" r="12" fill="#34a853" />
          <path d="M12 12L1.600 6A12 12 0 0 1 22.400 6z" fill="#ea4335" />
          <path d="M12 6.500h10.700A12 12 0 0 1 12 24l5-9z" fill="#fbc116" />
          <path d="M1.600 6L7 15l5-3V6.500h10.700A12 12 0 0 0 1.600 6z" fill="#e33b2e" />
          <circle cx="12" cy="12" r="5.800" fill="#fff" />
          <circle cx="12" cy="12" r="4.500" fill="#3f82ee" />
        </svg>
      </TaskItem>
      <TaskItem>
        <div className="flex size-[24px] items-center justify-center rounded-full bg-[#0b5cff] pb-[1px] text-[7px] font-semibold leading-none tracking-[-0.2px]">zoom</div>
      </TaskItem>
      <TaskItem>
        <svg width="24" height="24" viewBox="0 0 24 24">
          <path d="M12 0l6 6-6 6-6-6z" fill="#ee7b72" />
          <path d="M6 6l6 6-6 6-6-6z" fill="#6f9ff0" />
          <path d="M18 6l6 6-6 6-6-6z" fill="#86c96b" />
          <path d="M12 12l6 6-6 6-6-6z" fill="#f5dd7a" />
          <path d="M8.500 4.500L12 8v9M12 8.500l4.500 4" stroke="#1b1b1b" strokeWidth="1.800" fill="none" />
          <circle cx="12" cy="7.500" r="2" fill="#1b1b1b" /><circle cx="12" cy="17.500" r="2.200" fill="#1b1b1b" /><circle cx="17" cy="12.500" r="2.200" fill="#1b1b1b" />
        </svg>
      </TaskItem>
      <TaskItem open>
        <svg width="24" height="24" viewBox="0 0 24 24">
          <path d="M17.500 0L24 3v18l-6.500 3z" fill="#2aa5f0" />
          <path d="M17.500 0v6.500L3.500 17.500 0 15.500v-1.500z" fill="#1479c4" />
          <path d="M17.500 24v-6.500L3.500 6.500 0 8.500V10z" fill="#1b8bd8" />
        </svg>
      </TaskItem>
      <TaskItem>
        <div className="relative flex size-[24px] items-center justify-center">
          <svg width="24" height="24" viewBox="0 0 24 24" className="absolute"><path d="M1 4Q3-1 9 1q3-1.500 6 0 5-2 8 2 0 6-3.500 11.500l3 .5-4 2-1 5q-2 3-4 1l-1-7-3 2Q5 19 3 14 1 8 1 4z" fill="#33658f" /></svg>
          <SiPostgresql size={24} color="#b4c6d6" className="relative" />
        </div>
      </TaskItem>
      <TaskItem>
        <svg width="22" height="22" viewBox="0 0 22 22">
          <circle cx="11" cy="11" r="10.500" fill="#fff" />
          <circle cx="11" cy="11" r="8.300" fill="#5b45b8" />
          <circle cx="7.300" cy="7.300" r="3.600" fill="#fff" />
        </svg>
      </TaskItem>
      <TaskItem open>
        <div className="relative flex size-[24px] items-center justify-center rounded-full bg-[#5865f2]">
          <FaDiscord size={15} color="#fff" />
          <div className="absolute left-[11px] top-[11px] flex size-[14px] items-center justify-center rounded-full bg-[#ee5454] text-[9px] leading-none tracking-[-0.3px]">9+</div>
        </div>
      </TaskItem>
      <TaskItem open active>
        <svg width="22" height="22" viewBox="0 0 22 22">
          <path d="M3 0h18.500v21.500H0V3z" fill="#d6efd2" />
          <path d="M1 3q1-2 3-2h17v9q-9 1-14 11H1z" fill="#a6d8a0" />
          <path d="M11.500 12.500l10.500 1.500-3 7-10-2z" fill="#fff" />
          <path d="M12 14l8 1.500M11 16l8 1.500M10.500 18l8 1.500" stroke="#67a866" strokeWidth=".9" />
          <path d="M3 4h4l2.500 4L12.500 3H17l-5 7 3 5h-3.500l-2-3L6.500 17H3l4.500-7z" fill="#3b8a2e" />
        </svg>
      </TaskItem>
      <div className="ml-auto flex items-center text-[12px]">
        <Slot w="w-[22px]"><svg width="12" height="7" viewBox="0 0 12 7" fill="none" stroke="#fff" strokeWidth="1.300"><path d="M.7 6.300L6 1l5.300 5.300" /></svg></Slot>
        <Slot w="w-[36px]" className="tracking-[-0.7px]">ESP</Slot>
        <div className="flex w-[71px] flex-col items-center leading-[19px] tracking-[-0.6px]">
          <span>16:10</span>
          <span>23/06/2023</span>
        </div>
        <div className="h-[40px] w-px bg-[#555]" />
        <div className="w-[4px]" />
      </div>
    </footer>
  );
}

export default function App() {
  return (
    <div className="flex h-[768px] w-[1366px] flex-col overflow-hidden bg-white font-['Noto_Sans',sans-serif] text-[11.500px] leading-[15px] tracking-[-0.2px] text-[#3f4247]">
      <TitleBar />
      <TabRow />
      <Ribbon />
      <FormulaBar />
      <div className="flex">
        <Sheet />
        <VerticalScroll />
      </div>
      <SheetTabs />
      <StatusBar />
      <Taskbar />
    </div>
  );
}
